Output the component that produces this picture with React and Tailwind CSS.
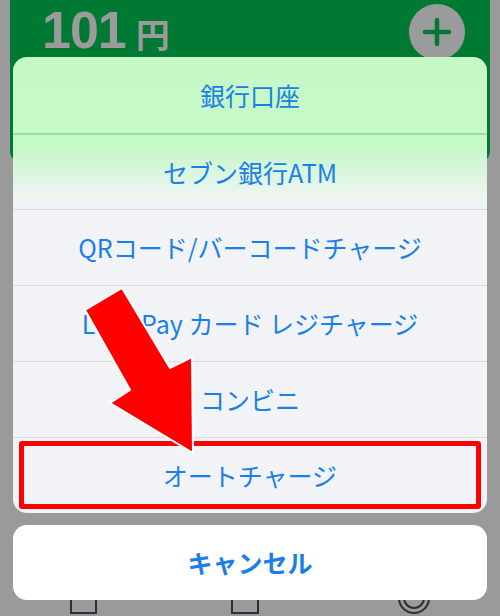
import React from "react";

const font = { fontFamily: '"Noto Sans CJK JP", "Noto Sans", sans-serif' };

function Row({ children, highlight }) {
  return (
    <div className="relative h-[76px] flex items-center justify-center text-[25px] leading-none text-[#1a80e6] border-t border-[#d9d9de]">
      <span>{children}</span>
      {highlight && (
        <div className="absolute left-[6px] right-[6px] top-[3px] bottom-[4px] border-[5px] border-[#ff0000] rounded-[3px]" />
      )}
    </div>
  );
}

export default function App() {
  return (
    <div
      className="relative w-[500px] h-[616px] overflow-hidden bg-[#9a9a9a] flex flex-col"
      style={font}
    >
      {/* background page: green card */}
      <div className="mx-[10px] h-[163px] rounded-b-[12px] bg-[#007a33] flex justify-between items-start pl-[32px] pr-[25px]">
        <div className="flex items-baseline text-[#9b9b9b] font-bold mt-[4px]">
          <span className="text-[52px] leading-none tracking-[-1px]" style={{ fontFamily: '"Liberation Sans", Arial, sans-serif' }}>101</span>
          <span className="text-[34px] leading-none ml-[10px]">円</span>
        </div>
        <div className="mt-[4px] w-[56px] h-[56px] rounded-full bg-[#9b9b9b] flex items-center justify-center">
          <svg width="30" height="30" viewBox="0 0 30 30">
            <path d="M15 3V27M3 15H27" stroke="#007a33" strokeWidth="4.5" strokeLinecap="round" />
          </svg>
        </div>
      </div>

      {/* bottom tab bar icons (background) */}
      <div className="mt-auto h-[16px] flex justify-between px-[70px] items-start">
        <div className="w-[27px] h-[16px] border-2 border-t-0 border-[#2a2f3a] mt-[-2px]" />
        <div className="w-[28px] h-[16px] border-2 border-t-0 border-[#2a2f3a] mt-[-2px] ml-[95px]" />
        <div className="w-[32px] h-[32px] rounded-full border-2 border-[#2a2f3a] mt-[-18px] ml-[100px] flex items-center justify-center">
          <div className="w-[22px] h-[22px] rounded-full border-2 border-[#2a2f3a]" />
        </div>
      </div>

      {/* action sheet overlay */}
      <div className="absolute left-[13px] top-[57px] w-[474px] flex flex-col gap-[12px]">
        <div className="rounded-[14px] overflow-hidden bg-[linear-gradient(to_bottom,#c6f8c7_0px,#c6f8c8_90px,#d9f6de_115px,#eef5f2_140px,#f1f3f6_150px,#f1f3f6_100%)]">
          <div className="h-[76px] flex items-center justify-center text-[25px] leading-none text-[#1a80e6]">
            <span>銀行口座</span>
          </div>
          <div className="h-[76px] flex items-center justify-center text-[25px] leading-none text-[#1a80e6] border-t-2 border-[#8ee494]">
            <span>セブン銀行ATM</span>
          </div>
          <Row>QRコード/バーコードチャージ</Row>
          <Row>LINE Pay カード レジチャージ</Row>
          <Row>コンビニ</Row>
          <Row highlight>オートチャージ</Row>
        </div>
        <div className="h-[75px] rounded-[14px] bg-white flex items-center justify-center text-[25px] font-bold text-[#1a80e6] leading-none">
          キャンセル
        </div>
      </div>

      {/* red arrow annotation */}
      <svg className="absolute left-0 top-0" width="500" height="616" viewBox="0 0 500 616">
        <polygon
          points="122,288 170,368 192,357 193,453 110,403 130,390 85,310"
          fill="#ff0000"
          stroke="#ffffff"
          strokeWidth="2"
          strokeLinejoin="miter"
        />
      </svg>
    </div>
  );
}
